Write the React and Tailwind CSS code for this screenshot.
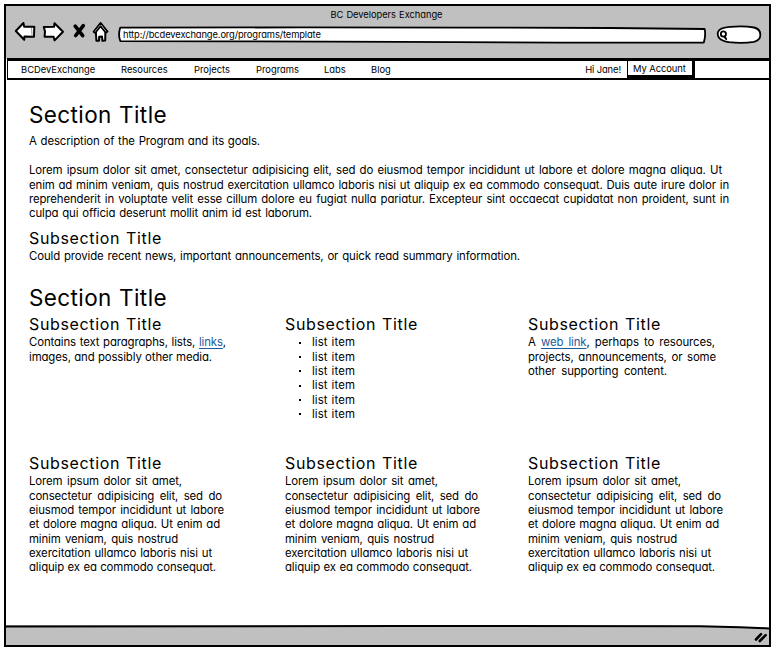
import React from "react";

const LINE = "block whitespace-nowrap [text-align-last:justify]";

function Line({ w, children }) {
  return <span className={`${LINE} ${w}`}>{children}</span>;
}

function SectionTitle({ children }) {
  return (
    <h1 className="w-[138px] whitespace-nowrap text-[22.5px] leading-[28px] font-normal tracking-[0.4px] [text-align-last:justify]">
      {children}
    </h1>
  );
}

function SubTitle() {
  return (
    <h2 className="-mt-px mb-px w-[133px] whitespace-nowrap text-[16px] leading-[20px] font-normal tracking-[0.65px] [text-align-last:justify]">
      Subsection Title
    </h2>
  );
}

function Lorem() {
  return (
    <section>
      <SubTitle />
      <p>
        <Line w="w-[153px]">Lorem ipsum dolor sit amet,</Line>
        <Line w="w-[193px]">consectetur adipisicing elit, sed do</Line>
        <Line w="w-[195px]">eiusmod tempor incididunt ut labore</Line>
        <Line w="w-[191px]">et dolore magna aliqua. Ut enim ad</Line>
        <Line w="w-[149px]">minim veniam, quis nostrud</Line>
        <Line w="w-[183px]">exercitation ullamco laboris nisi ut</Line>
        <Line w="w-[187px]">aliquip ex ea commodo consequat.</Line>
      </p>
    </section>
  );
}

function Toolbar() {
  return (
    <header className="h-[53px] bg-[#c0c0c0]">
      <div className="flex h-[17px] justify-center pt-[1px] text-[9.3px] leading-[15px] tracking-[-0.02px]">
        <span className="-ml-[2px] w-[112px] whitespace-nowrap [text-align-last:justify]">BC Developers Exchange</span>
      </div>
      <div className="flex h-[27px] items-start pl-[8px]">
        <svg className="-mt-[3px]" width="96" height="24" viewBox="14 20 96 24" fill="#fff" stroke="#000" strokeWidth="2" strokeLinejoin="round" strokeLinecap="round">
          <path d="M15.8 31 L23.4 23 L24.2 26.8 L34.3 26.8 L34 36.8 L24.5 36.4 L24.2 39.8 Z" />
          <path d="M31.6 28.4 L32 35.2" strokeWidth="1" stroke="#999" />
          <path d="M43.8 27 L54 26.8 L54.5 23.2 L63 31.8 L54.6 40.4 L53.6 36.8 L44.6 36.8 L45 31.5 Z" />
          <path d="M75.2 26.2 L82.7 35.6 M83.3 25.6 L75.7 35.5" fill="none" strokeWidth="3.6" />
          <path d="M95.8 31 L96.4 40.8 L99 40.8 L99.2 36.8 L102 36.6 L102.4 40.8 L105.2 40.6 L105.4 31 L100.4 25.5 Z" />
          <path d="M93.5 31.8 L100.6 22.8 L107.6 31.6 L105.8 32.8 L100.5 26.2 L95.2 33 Z" strokeWidth="1.7" />
        </svg>
        <div className="relative mt-[3px] ml-[8px] h-[20px] w-[588px]">
          <svg className="absolute inset-0" width="588" height="20" viewBox="118 26 588 20" fill="#fff" stroke="#000" strokeWidth="1.8" strokeLinejoin="round">
            <path d="M120.2 27.7 L300 27.4 L470 27.6 L610 28 L704.6 29 Q706 35 703.8 42.6 L560 42.6 L400 41.8 L230 41.3 L120.4 41.2 Q117.8 35 120.2 27.7 Z" />
          </svg>
          <div className="relative w-[206px] whitespace-nowrap pt-[1px] pl-[5px] text-[9.4px] leading-[15px] tracking-[-0.13px]">
            <Line w="w-[202px]">http://bcdevexchange.org/programs/template</Line>
          </div>
        </div>
        <svg className="ml-[10px]" width="46" height="22" viewBox="716 23 46 22" fill="#fff" stroke="#000" strokeWidth="1.8" strokeLinecap="round">
          <path d="M718 32 Q719.5 27.5 730 26.8 Q744 25.6 754 27.5 Q760.5 29 760.3 35 Q760.5 40 754 41.8 Q743 43.6 729 42.2 Q716 40 718 32 Z" />
          <circle cx="723.4" cy="34" r="2.6" strokeWidth="1.8" />
          <path d="M724.4 36.6 L726.2 39" strokeWidth="2" />
        </svg>
      </div>
    </header>
  );
}

const NAV = [
  ["BCDevExchange", "ml-[13px] w-[75px]"],
  ["Resources", "ml-[25px] w-[47px]"],
  ["Projects", "ml-[26px] w-[38px]"],
  ["Programs", "ml-[24px] w-[43px]"],
  ["Labs", "ml-[25px] w-[22px]"],
  ["Blog", "ml-[25px] w-[20px]"],
];

function Nav() {
  return (
    <nav className="-mt-px ml-px flex h-[22px] border-t-3 border-b-2 border-l border-black bg-white text-[9.4px] leading-[18px]">
      {NAV.map(([label, box]) => (
        <a key={label} className={`whitespace-nowrap ${box}`}>{label}</a>
      ))}
      <span className="ml-auto whitespace-nowrap tracking-[-0.1px] leading-[17px]">Hi Jane!</span>
      <span className="mr-[74px] ml-[6px] h-[17px] w-[68px] border-r-3 border-b-3 border-l border-black pl-[5px] whitespace-nowrap leading-[15px] tracking-[-0.05px]">
        My Account
      </span>
    </nav>
  );
}

export default function App() {
  return (
    <div className="h-[650px] w-[773px] bg-white pt-[4px] pl-[4px] font-[Inter,'Open_Sans',sans-serif] text-black [font-weight:430] [font-feature-settings:'cv11','calt'_0]">
      <div className="flex h-[643px] w-[767px] flex-col border-2 border-black">
        <Toolbar />
        <Nav />
        <main className="flex-1 pt-[21px] pl-[23px] text-[11.4px] leading-[14.35px] tracking-[-0.12px]">
          <SectionTitle>Section Title</SectionTitle>
          <div className="pt-[5px]">
            <Line w="w-[231px]">A description of the Program and its goals.</Line>
          </div>
          <p className="h-[67px] pt-[15px]">
            <Line w="w-[693px]">Lorem ipsum dolor sit amet, consectetur adipisicing elit, sed do eiusmod tempor incididunt ut labore et dolore magna aliqua. Ut</Line>
            <Line w="w-[700px]">enim ad minim veniam, quis nostrud exercitation ullamco laboris nisi ut aliquip ex ea commodo consequat. Duis aute irure dolor in</Line>
            <Line w="w-[700px]">reprehenderit in voluptate velit esse cillum dolore eu fugiat nulla pariatur. Excepteur sint occaecat cupidatat non proident, sunt in</Line>
            <Line w="w-[283px]">culpa qui officia deserunt mollit anim id est laborum.</Line>
          </p>
          <div className="h-[55px] pt-[14px]">
            <SubTitle />
            <Line w="w-[491px]">Could provide recent news, important announcements, or quick read summary information.</Line>
          </div>
          <div className="pt-[14px]">
            <SectionTitle>Section Title</SectionTitle>
          </div>
          <div className="grid grid-cols-[256px_243px_220px] pt-[3px]">
            <section className="h-[139px]">
              <SubTitle />
              <Line w="w-[197px]">Contains text paragraphs, lists, <a className="text-[#1d5a9e] underline underline-offset-2">links</a>,</Line>
              <Line w="w-[183px]">images, and possibly other media.</Line>
            </section>
            <section>
              <SubTitle />
              <ul className="pl-[14px]">
                {[1, 2, 3, 4, 5, 6].map((n) => (
                  <li key={n} className="flex items-center gap-[11px] tracking-[0.1px]">
                    <span className="h-[2px] w-[2px] bg-black" />
                    <Line w="w-[43px]">list item</Line>
                  </li>
                ))}
              </ul>
            </section>
            <section>
              <SubTitle />
              <Line w="w-[187px]">A <a className="text-[#1d5a9e] underline underline-offset-2">web link</a>, perhaps to resources,</Line>
              <Line w="w-[188px]">projects, announcements, or some</Line>
              <Line w="w-[139px]">other supporting content.</Line>
            </section>
            <Lorem />
            <Lorem />
            <Lorem />
          </div>
        </main>
        <footer className="relative h-[20px] bg-[#c0c0c0]">
          <svg className="absolute inset-0" width="763" height="20" viewBox="6 625 763 20">
            <path d="M6 625 H769 V628 L730 626.8 L640 626 L6 625 Z" fill="#fff" />
            <path d="M6 626.5 L400 626 L700 626.3 L740 627.2 L769 628.4" fill="none" stroke="#000" strokeWidth="2" />
            <path d="M756 639.5 L761 634.2 M759.8 641 L765.6 635.2" stroke="#000" strokeWidth="2.6" strokeLinecap="round" />
          </svg>
        </footer>
      </div>
    </div>
  );
}
